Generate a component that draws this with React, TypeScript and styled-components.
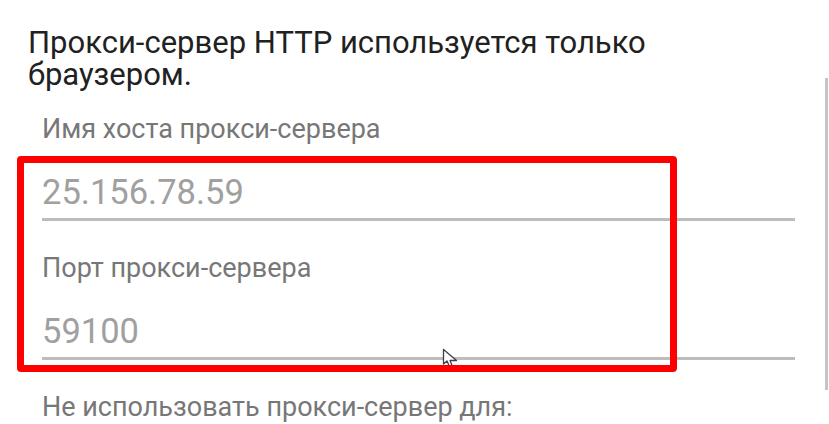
import React from "react";
import styled, { createGlobalStyle } from "styled-components";

const GlobalStyle = createGlobalStyle`
  html, body {
    margin: 0;
    padding: 0;
    background: #ffffff;
  }
  body {
    font-family: Roboto, "Noto Sans", "Liberation Sans", sans-serif;
  }
`;

const Page = styled.div`
  position: relative;
  width: 829px;
  height: 424px;
  overflow: hidden;
  display: grid;
  grid-template-columns: 1fr 4px;
  background: #ffffff;
`;

const Content = styled.div`
  padding: 27px 0 0 28px;
  display: flex;
  flex-direction: column;
`;

const Title = styled.div`
  font-size: 31px;
  line-height: 32px;
  color: #212121;
  width: 660px;
  margin-bottom: 23px;
`;

const Fields = styled.div`
  padding-left: 14px;
  width: 753px;
  display: flex;
  flex-direction: column;
  gap: 32px;
`;

const Field = styled.div`
  display: flex;
  flex-direction: column;
`;

const Label = styled.div`
  font-size: 27px;
  line-height: 30px;
  color: #777777;
  margin-bottom: 27.5px;
`;

const Value = styled.div`
  font-size: 34.5px;
  line-height: 40px;
  color: #a0a0a0;
  padding-bottom: 6.5px;
  border-bottom: 3px solid #bdbdbd;
`;

const ScrollTrack = styled.div`
  padding-top: 78px;
`;

const ScrollThumb = styled.div`
  width: 3px;
  height: 312px;
  background: #c4c4c4;
`;

const Highlight = styled.div`
  position: absolute;
  left: 17px;
  top: 156px;
  width: 646px;
  height: 202px;
  border: 7px solid #ff0000;
  border-radius: 4px;
  pointer-events: none;
`;

const Cursor = styled.svg`
  position: absolute;
  left: 442px;
  top: 348px;
`;

export default function App() {
  return (
    <>
      <GlobalStyle />
      <Page>
        <Content>
          <Title>Прокси-сервер HTTP используется только браузером.</Title>
          <Fields>
            <Field>
              <Label>Имя хоста прокси-сервера</Label>
              <Value>25.156.78.59</Value>
            </Field>
            <Field>
              <Label>Порт прокси-сервера</Label>
              <Value>59100</Value>
            </Field>
            <Field>
              <Label>Не использовать прокси-сервер для:</Label>
            </Field>
          </Fields>
        </Content>
        <ScrollTrack>
          <ScrollThumb />
        </ScrollTrack>
        <Cursor width="18" height="28" viewBox="0 0 18 28">
          <path
            d="M1.5 1.5 L1.5 16 L5 13 L9 22 L11.5 21 L8 12.5 L14.5 12.5 Z"
            fill="#ffffff"
            stroke="#3a3f4a"
            strokeWidth="1.3"
            strokeLinejoin="round"
          />
        </Cursor>
        <Highlight />
      </Page>
    </>
  );
}
